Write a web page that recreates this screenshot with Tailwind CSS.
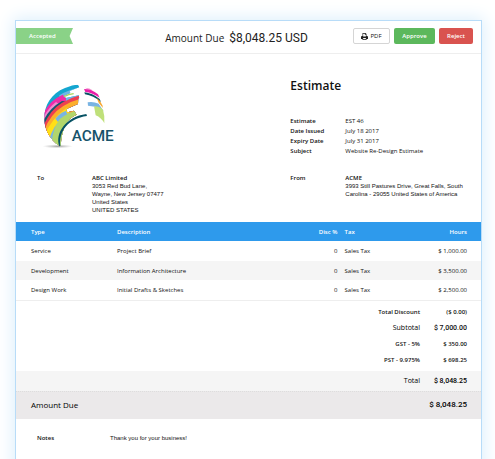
<!DOCTYPE html>
<html lang="en">
<head>
<meta charset="utf-8">
<meta name="viewport" content="width=device-width, initial-scale=1">
<title>Estimate EST 46</title>
<script src="https://cdn.jsdelivr.net/npm/@tailwindcss/browser@4"></script>
</head>
<body class="bg-white font-['Open_Sans',sans-serif] text-[6px] leading-[10px] text-[#111] overflow-hidden">
<main class="mt-5 ml-[15px] mr-[13px] min-h-[460px] border border-[#b8dcf8] bg-white shadow-[0_0_16px_2px_#dceffc]">
  <header class="flex h-[33px] items-center border-b border-[#eeeeee] pr-2 pb-[2px]">
    <div class="flex-1">
      <span class="flex h-4 w-[57px] items-center bg-[#8ad287] pl-[13px] font-semibold text-white [clip-path:polygon(0_0,100%_0,94%_50%,100%_100%,0_100%)]">Accepted</span>
    </div>
    <h1 class="flex items-baseline gap-[5px] pt-1 pr-4 text-[10px] leading-4 whitespace-nowrap text-[#222]"><span>Amount Due</span><strong class="font-['Roboto',sans-serif] text-[12px] font-normal">$8,048.25 USD</strong></h1>
    <div class="flex flex-1 justify-end gap-1">
      <button type="button" class="flex h-4 w-[37px] items-center justify-center gap-[2px] rounded-[2px] border border-[#d5d5d5] bg-white">
        <svg class="size-[7px]" viewBox="0 0 14 14" aria-hidden="true"><path fill="#222" fill-rule="evenodd" d="M3 0h6l2 2v4h1q2 0 2 2v4h-3v2H3v-2H0V8q0-2 2-2h1zM4.300 1.300V7h5.400V3.500H7.700V1.300zM4.300 10v2.700h5.400V10z"/></svg>
        PDF
      </button>
      <button type="button" class="h-4 w-[41px] rounded-[2px] bg-[#5cb85c] font-semibold text-white">Approve</button>
      <button type="button" class="h-4 w-[34px] rounded-[2px] bg-[#d9534f] font-semibold text-white">Reject</button>
    </div>
  </header>

  <section class="grid grid-cols-[59%_41%] pt-[22px]">
    <div class="pt-1 pl-6">
      <svg class="h-[75px] w-[80px]" viewBox="30 30 240 225" role="img" aria-label="ACME">
        <defs>
          <radialGradient id="ground"><stop stop-color="#777" stop-opacity=".7"/><stop offset="1" stop-color="#aaa" stop-opacity="0"/></radialGradient>
          <clipPath id="globe"><path d="M89 228C25 190 25 85 105 54Q128 44 144 44L148 52 118 63 121 69 100 79 108 84 146 76 148 84 145 86 144 102 108 118 112 127 132 122 140 134Q96 150 92 228Z"/></clipPath>
        </defs>
        <ellipse cx="83" cy="229" rx="46" ry="6" fill="url(#ground)"/>
        <g clip-path="url(#globe)">
          <path d="M20 20H160V240H20Z" fill="#14a6d0"/>
          <path d="M88 76Q104 64 150 52V240H88Z" fill="#6fb6e5"/>
          <path d="M36 138Q56 92 98 74L108 84V240H30Z" fill="#ee2ba9"/>
          <path d="M36 150Q52 116 78 96L90 104V240H30Z" fill="#f08bd0"/>
          <path d="M34 166Q52 118 96 93L150 100V240H30Z" fill="#12596f"/>
          <path d="M36 180Q54 124 96 98Q120 84 150 76V240H30Z" fill="#ee4051"/>
          <path d="M40 188Q58 134 100 108Q122 94 150 87V240H30Z" fill="#fbae2c"/>
          <path d="M44 196Q62 148 112 112L116 128V240H30Z" fill="#ffdf17"/>
          <path d="M56 212Q68 166 108 134L116 128V240H30Z" fill="#79b4e3"/>
          <path d="M76 146Q88 130 108 122L112 134 84 156Z" fill="#79b4e3"/>
          <path d="M66 222Q66 176 90 146Q114 128 145 120V240H60Z" fill="#b2d66b"/>
        </g>
        <path d="M102 80Q116 73 131 71" stroke="#a9d65b" stroke-width="4" fill="none"/>
        <path d="M88 229C74 190 108 140 169 132L171 138C114 146 86 184 91 228Z" fill="#075264"/>
        <path d="M165 53Q180 54 188 61L181 63Z" fill="#f39ad3"/>
        <path d="M162 57Q185 57 204 73L209 83Q186 68 166 66Z" fill="#e91ea8"/>
        <path d="M163 67Q187 69 209 87L213 96Q190 77 165 73Z" fill="#075264"/>
        <path d="M200 84Q212 92 217 106L219 114 206 98Z" fill="#f9a52c"/>
        <path d="M173 97Q190 94 206 101L221 124 195 110 174 107Z" fill="#79b4e3"/>
        <path d="M192 109Q210 108 219 120Q225 138 223 160Q214 143 197 136Z" fill="#bfe07a"/>
        <text x="125" y="212" fill="#17536b" class="font-['Roboto',sans-serif] text-[46px] font-medium">ACME</text>
      </svg>
    </div>
    <div>
      <h2 class="mt-[2px] text-[12px] leading-4 font-semibold">Estimate</h2>
      <dl class="mt-[22px] grid grid-cols-[55px_1fr] pb-px">
        <dt class="font-semibold">Estimate</dt><dd>EST 46</dd>
        <dt class="font-semibold">Date Issued</dt><dd>July 18 2017</dd>
        <dt class="font-semibold">Expiry Date</dt><dd>July 31 2017</dd>
        <dt class="font-semibold">Subject</dt><dd>Website Re-Design Estimate</dd>
      </dl>
    </div>
  </section>

  <section class="grid grid-cols-[59%_41%] pt-[17px] pb-2 leading-2">
    <div class="grid grid-cols-[55px_1fr] pl-[21px]">
      <h3 class="font-semibold">To</h3>
      <address class="font-['Liberation_Sans',sans-serif] not-italic"><strong class="font-['Open_Sans',sans-serif] font-semibold">ABC Limited</strong><br>3053 Red Bud Lane,<br>Wayne, New Jersey 07477<br>United States<br>UNITED STATES</address>
    </div>
    <div class="grid grid-cols-[55px_1fr] pr-4">
      <h3 class="font-semibold">From</h3>
      <address class="font-['Liberation_Sans',sans-serif] not-italic"><strong class="font-['Open_Sans',sans-serif] font-semibold">ACME</strong><br>3993 Still Pastures Drive, Great Falls, South<br>Carolina - 29055 United States of America</address>
    </div>
  </section>

  <table class="w-full table-fixed border-collapse">
    <colgroup><col class="w-[101px]"><col><col class="w-[10%]"><col class="w-[14%]"><col class="w-[16%]"></colgroup>
    <thead class="bg-[#2e9aec] text-white">
      <tr class="h-[19px] text-left"><th class="pl-[15px] font-semibold">Type</th><th class="font-semibold">Description</th><th class="pr-1 text-right font-semibold">Disc %</th><th class="pl-[3px] font-semibold">Tax</th><th class="pr-[14px] text-right font-semibold">Hours</th></tr>
    </thead>
    <tbody class="border-b border-[#eeeeee]">
      <tr class="h-5"><td class="pl-[15px]">Service</td><td>Project Brief</td><td class="pr-1 text-right">0</td><td class="pl-[3px]">Sales Tax</td><td class="pr-[14px] text-right">$ 1,000.00</td></tr>
      <tr class="h-[19px] bg-[#f5f5f5]"><td class="pl-[15px]">Development</td><td>Information Architecture</td><td class="pr-1 text-right">0</td><td class="pl-[3px]">Sales Tax</td><td class="pr-[14px] text-right">$ 3,500.00</td></tr>
      <tr class="h-5"><td class="pl-[15px]">Design Work</td><td>Initial Drafts &amp; Sketches</td><td class="pr-1 text-right">0</td><td class="pl-[3px]">Sales Tax</td><td class="pr-[14px] text-right">$ 2,500.00</td></tr>
    </tbody>
  </table>

  <dl class="grid auto-rows-[16px] grid-cols-[1fr_47px] items-center pt-[3px] pr-[14px] pb-[3px] text-right font-semibold">
    <dt>Total Discount</dt><dd>($ 0.00)</dd>
    <dt class="text-[7px] font-normal text-black">Subtotal</dt><dd class="font-['Roboto',sans-serif] text-[7px] font-medium">$ 7,000.00</dd>
    <dt>GST - 5%</dt><dd>$ 350.00</dd>
    <dt>PST - 9.975%</dt><dd>$ 698.25</dd>
  </dl>
  <dl class="grid h-5 grid-cols-[1fr_47px] items-center bg-[#f5f5f5] pr-[14px] text-right text-[7px] text-black">
    <dt>Total</dt><dd class="font-['Roboto',sans-serif] font-medium">$ 8,048.25</dd>
  </dl>
  <dl class="flex h-7 items-center justify-between border-t border-dotted border-[#dddddd] bg-[#ebe9ea] pr-[14px] pl-[15px] text-[8px] text-black">
    <dt>Amount Due</dt><dd class="font-['Roboto',sans-serif] font-medium">$ 8,048.25</dd>
  </dl>
  <section class="grid grid-cols-[73px_1fr] pt-[14px] pl-[21px]">
    <h3 class="font-semibold">Notes</h3>
    <p class="font-['Liberation_Sans',sans-serif]">Thank you for your business!</p>
  </section>
</main>
</body>
</html>
